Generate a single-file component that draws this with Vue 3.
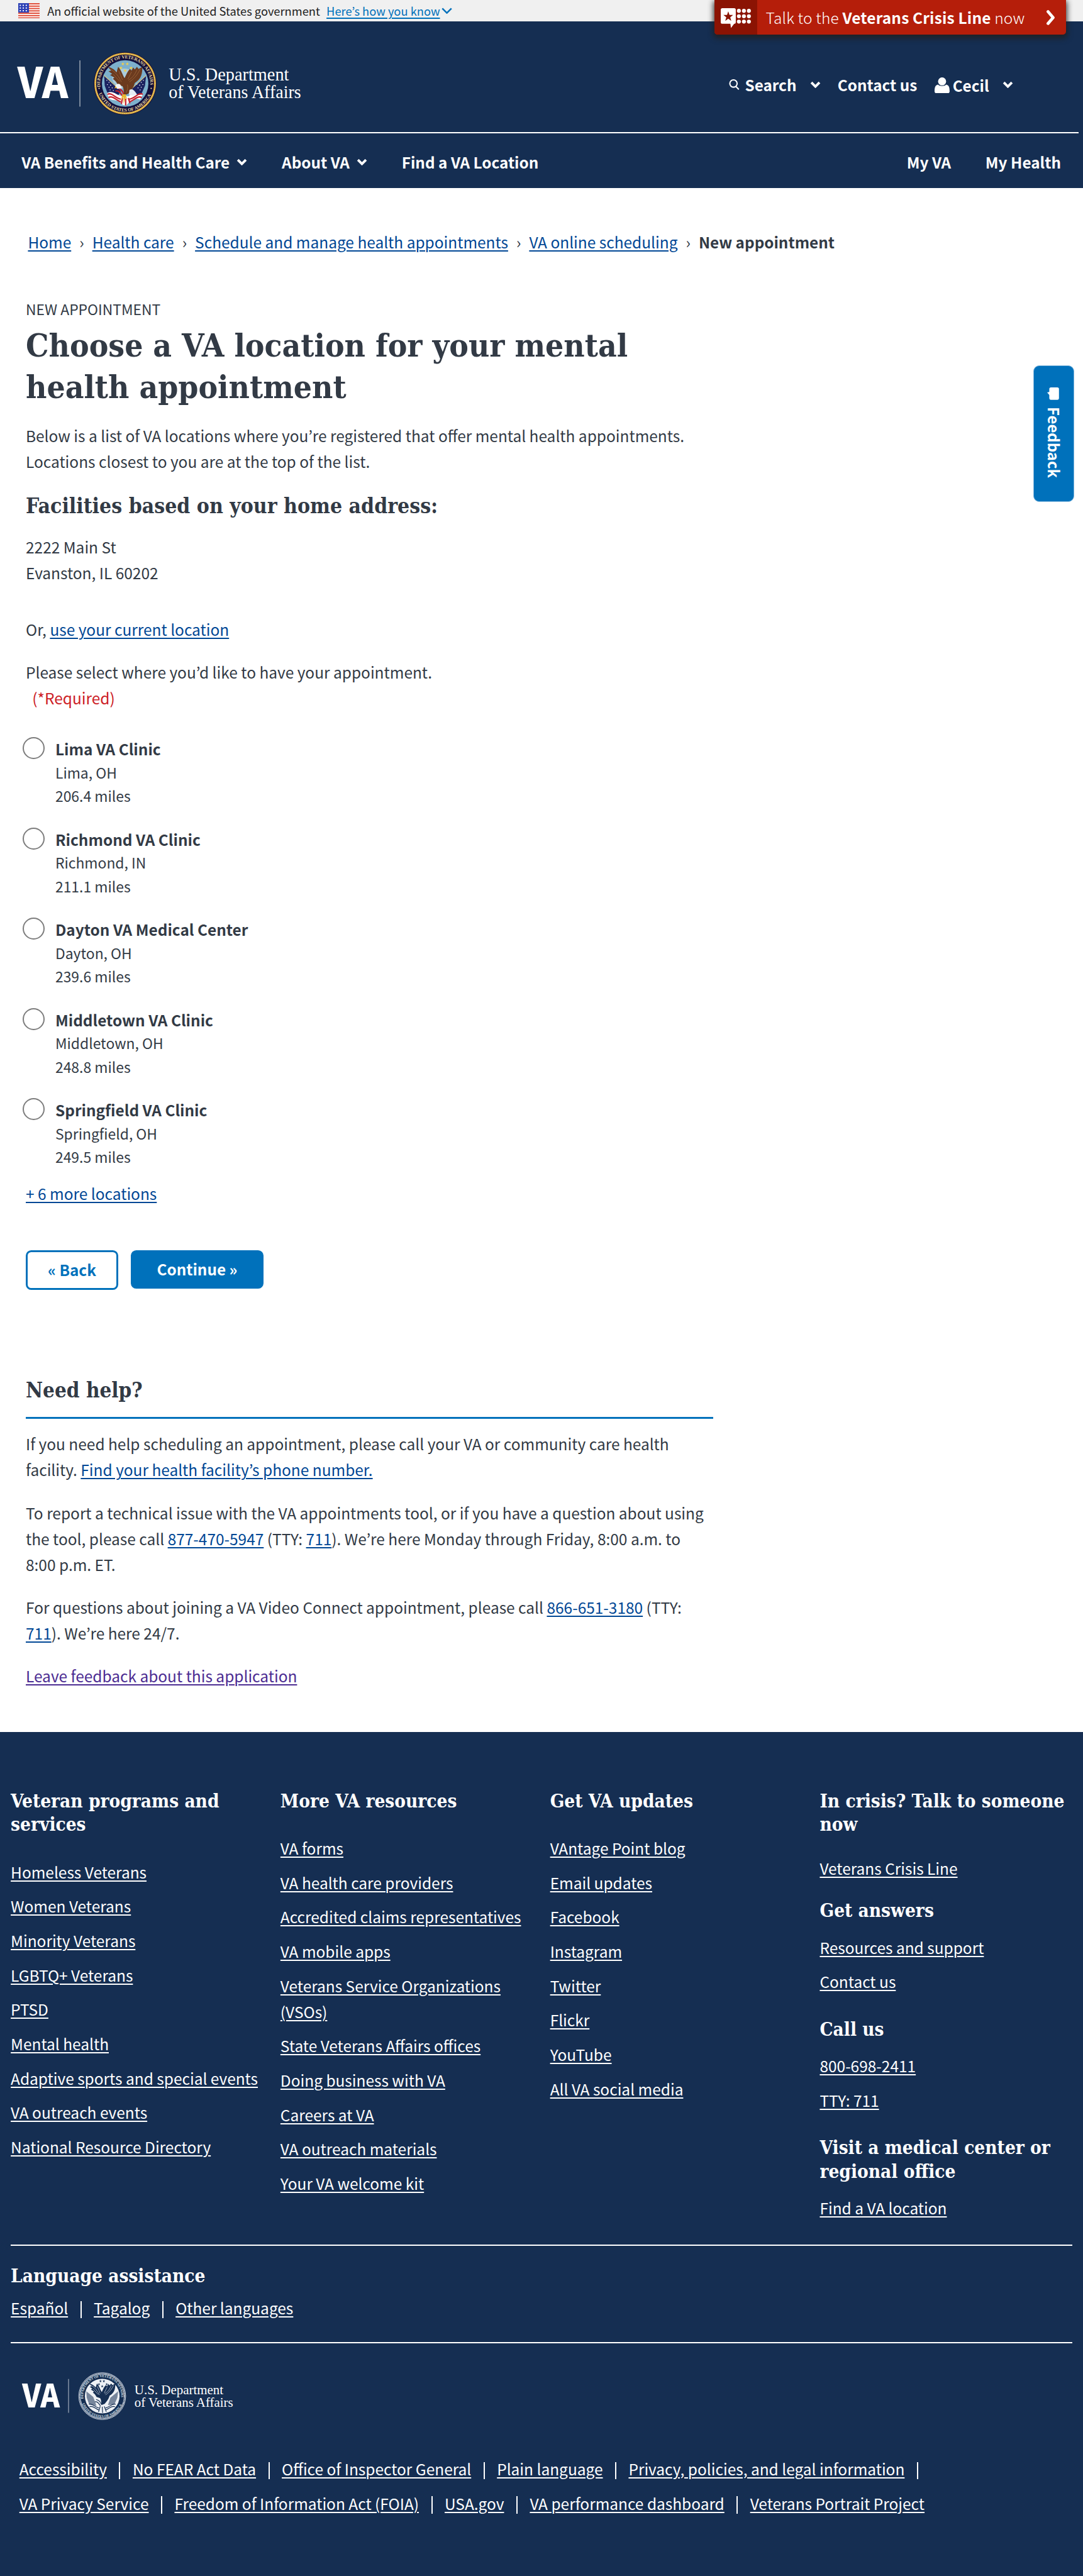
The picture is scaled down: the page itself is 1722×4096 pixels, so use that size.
<script setup>
import { ref } from 'vue'

const crumbs = ['Home', 'Health care', 'Schedule and manage health appointments', 'VA online scheduling']

const facilities = [
  { name: 'Lima VA Clinic', city: 'Lima, OH', distance: '206.4 miles' },
  { name: 'Richmond VA Clinic', city: 'Richmond, IN', distance: '211.1 miles' },
  { name: 'Dayton VA Medical Center', city: 'Dayton, OH', distance: '239.6 miles' },
  { name: 'Middletown VA Clinic', city: 'Middletown, OH', distance: '248.8 miles' },
  { name: 'Springfield VA Clinic', city: 'Springfield, OH', distance: '249.5 miles' },
]
const selected = ref(null)

const columns = [
  {
    title: 'Veteran programs and services',
    links: ['Homeless Veterans', 'Women Veterans', 'Minority Veterans', 'LGBTQ+ Veterans', 'PTSD', 'Mental health', 'Adaptive sports and special events', 'VA outreach events', 'National Resource Directory'],
  },
  {
    title: 'More VA resources',
    links: ['VA forms', 'VA health care providers', 'Accredited claims representatives', 'VA mobile apps', 'Veterans Service Organizations (VSOs)', 'State Veterans Affairs offices', 'Doing business with VA', 'Careers at VA', 'VA outreach materials', 'Your VA welcome kit'],
  },
  {
    title: 'Get VA updates',
    links: ['VAntage Point blog', 'Email updates', 'Facebook', 'Instagram', 'Twitter', 'Flickr', 'YouTube', 'All VA social media'],
  },
]

const contactGroups = [
  { title: 'In crisis? Talk to someone now', links: ['Veterans Crisis Line'] },
  { title: 'Get answers', links: ['Resources and support', 'Contact us'] },
  { title: 'Call us', links: ['800-698-2411', 'TTY: 711'] },
  { title: 'Visit a medical center or regional office', links: ['Find a VA location'] },
]

const languages = ['Español', 'Tagalog', 'Other languages']
const legalRows = [
  ['Accessibility', 'No FEAR Act Data', 'Office of Inspector General', 'Plain language', 'Privacy, policies, and legal information'],
  ['VA Privacy Service', 'Freedom of Information Act (FOIA)', 'USA.gov', 'VA performance dashboard', 'Veterans Portrait Project'],
]

const starPoints = '0,-3.4 0.8,-1.1 3.2,-1.1 1.3,0.4 2,2.8 0,1.4 -2,2.8 -1.3,0.4 -3.2,-1.1 -0.8,-1.1'
const sealStars = [[-4.3, -36.5], [4, -36.5], [-8, -29], [11, -29], [0, -24]]
const flagStars = [[-34, -6], [-30, -2], [-33, 2], [-27, 3], [-30, 7], [-24, 8], [-28, 12], [-22, 13], [34, -6], [30, -2], [33, 2], [27, 3], [30, 7], [24, 8], [28, 12], [22, 1]]
</script>

<template>
  <div class="page">
    <div class="gov-banner">
      <svg class="flag" viewBox="0 0 40 29">
        <rect width="40" height="29" fill="#fff" />
        <g fill="#e0503c">
          <rect v-for="n in 7" :key="n" :y="(n - 1) * 4.4" width="40" height="2.4" />
        </g>
        <rect width="20" height="17.5" fill="#2b3fb5" />
        <g fill="#fff">
          <template v-for="r in 3" :key="r">
            <rect v-for="c in 3" :key="c" :x="c * 5.6 - 3" :y="r * 5 - 2" width="2.4" height="2.2" />
          </template>
        </g>
      </svg>
      <span class="gov-text">An official website of the United States government</span>
      <a class="gov-link">Here’s how you know</a>
      <svg class="chev-gov" viewBox="0 0 20 12"><path d="M1.5 1.5 10 10 18.500 1.5" /></svg>
    </div>

    <a class="crisis">
      <span class="crisis-icon">
        <svg viewBox="0 0 56 38">
          <path fill="#fff" d="M3 0h22a3 3 0 0 1 3 3v23a3 3 0 0 1-3 3l-6 8-1-8H3a3 3 0 0 1-3-3V3a3 3 0 0 1 3-3z" />
          <path fill="#8b1303" d="m14 6 2.300 6.600 6.700.1-5.300 4.200 1.900 6.700L14 19.600l-5.600 4 1.900-6.700L5 12.700l6.700-.1z" />
          <g fill="#fff">
            <template v-for="r in 3" :key="r">
              <circle v-for="c in 3" :key="c" :cx="24.500 + c * 9.300" :cy="r * 10 - 5" r="3.700" />
            </template>
          </g>
        </svg>
      </span>
      <span class="crisis-text">Talk to the <b>Veterans Crisis Line</b> now</span>
      <svg class="crisis-chev" viewBox="0 0 18 28"><path d="M4 3 13.500 14 4 25" /></svg>
    </a>

    <header class="masthead">
      <svg class="logo" viewBox="30 92 540 126">
        <text class="va-mark" x="32" y="182.700" textLength="94.500" lengthAdjust="spacingAndGlyphs">VA</text>
        <path d="M148.300 112v86" stroke="#b7bfca" stroke-width="1.500" />
        <g transform="translate(232.500 155)">
          <circle r="58.500" fill="#120f3c" />
          <circle r="55.600" fill="none" stroke="#d9a83a" stroke-width="3.400" />
          <circle r="55.600" fill="none" stroke="#f3d67c" stroke-width="1.200" stroke-dasharray="2 1.500" />
          <circle r="43.300" fill="#7db0cc" />
          <ellipse cx="-2" cy="-10" rx="22" ry="18" fill="#a9cbdc" />
          <defs>
            <path id="arcTop" d="M-45.700 9.500A46.700 46.700 0 1 1 45.700 9.500" />
            <path id="arcBottom" d="M-50.600 13.500A52.400 52.400 0 0 0 50.600 13.500" />
          </defs>
          <text class="seal-text"><textPath href="#arcTop" startOffset="3" textLength="156">DEPARTMENT OF VETERANS AFFAIRS</textPath></text>
          <text class="seal-text"><textPath href="#arcBottom" startOffset="5" textLength="124">UNITED STATES OF AMERICA</textPath></text>
          <circle cx="-48.500" cy="9" r="1.300" fill="#f0dc9a" />
          <circle cx="48.500" cy="9" r="1.300" fill="#f0dc9a" />
          <path fill="#1b2260" d="M-39-14-8 14-14 24-32 20-38 4zM39-14 14 8 12 22 30 20 37 4z" />
          <path stroke="#d8c27a" stroke-width="1.200" d="M-39-15-14 8M39-15 14 8" />
          <circle v-for="(s, i) in flagStars" :key="i" :cx="s[0]" :cy="s[1]" r="0.900" fill="#fff" />
          <path fill="#fff" d="M-34 18C-22 10-14 26-4 22L6 24C16 14 24 26 34 18L28 30C16 26 14 32 8 34L2 41-4 40-10 34C-16 30-24 32-30 28z" />
          <path fill="none" stroke="#c5202c" stroke-width="2.600" d="M-33 20C-24 16-18 28-8 29M-31 26C-22 22-16 32-8 34M33 20C24 16 18 28 8 29M31 26C22 22 16 32 8 34M-18 14C-10 12-8 20-4 24M-15 8C-8 10-4 14-3 20M-5 27-7 38M1 28 1 41M6 27 9 37" />
          <path fill="#6b3a1e" d="M-33-32C-26-29-20-27-16-21L-13-31C-7-25-5-16-1-10C3-18 4-22 9-27L12-24 15-30 18-26 22-31 25-27 32-31C32-19 31-9 18-1C16 8 10 14 6 19L-2 22C-3 14-2 10-5 5L-14 2C-16-3-19-6-23-9L-20-11-28-16-24-18-31-23-26-24z" />
          <path fill="none" stroke="#9c653a" stroke-width="1" d="M-28-27C-18-22-11-12-7-3M-22-17-10-4M-12-24-5-7M28-27C22-14 15-8 8-3M22-26C18-15 12-10 6-6M12-22 5-8M4 2C6 8 4 12 2 17" />
          <path fill="#f4f4f4" d="M-18 3C-14-1-9 0-8 4L-6 9-15 10-18 6z" />
          <path fill="#e8b62f" d="M-18 5-20 9-15 8zM-5 20-8 32-3 25-3 38 1 26 4 30 1 20z" />
          <path fill="#e6edf4" d="M8 12C14 8 18 14 22 20C16 24 10 22 7 20z" />
          <polygon v-for="(s, i) in sealStars" :key="'s' + i" :points="starPoints" :transform="`translate(${s[0]} ${s[1]})`" fill="#f2cf4a" />
        </g>
        <text class="dept" x="313.500" y="149.500" textLength="224" lengthAdjust="spacingAndGlyphs">U.S. Department</text>
        <text class="dept" x="313.500" y="182.500" textLength="246.500" lengthAdjust="spacingAndGlyphs">of Veterans Affairs</text>
      </svg>
      <div class="utils">
        <svg class="mag" viewBox="0 0 20 20"><circle cx="8.500" cy="8" r="6.800" /><path d="m13 13.500 5.500 5.500" /></svg>
        <span class="u-search">Search</span>
        <svg class="chev u-chev1" viewBox="0 0 20 13"><path d="M2.500 2.500 10 10 17.500 2.500" /></svg>
        <span class="u-contact">Contact us</span>
        <svg class="person" viewBox="0 0 28 30"><circle cx="14" cy="7.500" r="7.500" /><path d="M6.500 13.500C9 17 19 17 21.500 13.500 27 15 28 19 28 26c0 2-1.500 4-4 4H4c-2.500 0-4-2-4-4 0-7 1-11 6.500-12.500z" /></svg>
        <span class="u-name">Cecil</span>
        <svg class="chev u-chev2" viewBox="0 0 20 13"><path d="M2.500 2.500 10 10 17.500 2.500" /></svg>
      </div>
    </header>

    <nav class="nav">
      <span class="nav-item">VA Benefits and Health Care<svg class="chev" viewBox="0 0 20 13"><path d="M2.500 2.500 10 10 17.500 2.500" /></svg></span>
      <span class="nav-item">About VA<svg class="chev" viewBox="0 0 20 13"><path d="M2.500 2.500 10 10 17.500 2.500" /></svg></span>
      <span class="nav-item">Find a VA Location</span>
      <span class="nav-item push">My VA</span>
      <span class="nav-item">My Health</span>
    </nav>

    <main class="main">
      <div class="crumbs">
        <template v-for="c in crumbs" :key="c">
          <a class="link">{{ c }}</a><span class="crumb-sep">›</span>
        </template>
        <b>New appointment</b>
      </div>

      <div class="eyebrow">NEW APPOINTMENT</div>
      <h1>Choose a VA location for your mental<br />health appointment</h1>
      <p class="intro">Below is a list of VA locations where you’re registered that offer mental health appointments.<br />Locations closest to you are at the top of the list.</p>
      <h2 class="home">Facilities based on your home address:</h2>
      <p class="address">2222 Main St<br />Evanston, IL 60202</p>
      <p class="or">Or, <a class="link">use your current location</a></p>
      <p class="prompt">Please select where you’d like to have your appointment.<br /><span class="required">(*Required)</span></p>

      <div class="facilities">
        <label v-for="f in facilities" :key="f.name" class="facility" @click="selected = f.name">
          <span class="radio" :class="{ on: selected === f.name }"></span>
          <span class="facility-text">
            <b>{{ f.name }}</b>
            <span>{{ f.city }}</span>
            <span>{{ f.distance }}</span>
          </span>
        </label>
      </div>

      <p class="more"><a class="link">+ 6 more locations</a></p>

      <div class="buttons">
        <button class="btn back">« Back</button>
        <button class="btn continue">Continue »</button>
      </div>

      <section class="help">
        <h2>Need help?</h2>
        <p>If you need help scheduling an appointment, please call your VA or community care health<br />facility. <a class="link">Find your health facility’s phone number.</a></p>
        <p>To report a technical issue with the VA appointments tool, or if you have a question about using<br />the tool, please call <a class="link">877-470-5947</a> (TTY: <a class="link">711</a>). We’re here Monday through Friday, 8:00 a.m. to<br />8:00 p.m. ET.</p>
        <p>For questions about joining a VA Video Connect appointment, please call <a class="link">866-651-3180</a> (TTY:<br /><a class="link">711</a>). We’re here 24/7.</p>
        <p><a class="link visited">Leave feedback about this application</a></p>
      </section>
    </main>

    <button class="feedback">
      <svg viewBox="0 0 22 23"><path d="M7 0h12a3 3 0 0 1 3 3v17a3 3 0 0 1-3 3H7a3 3 0 0 1-3-3v-6L0 9.500l4-1V3a3 3 0 0 1 3-3z" /></svg>
      <span>Feedback</span>
    </button>

    <footer class="footer">
      <div class="columns">
        <div v-for="col in columns" :key="col.title" class="col">
          <h3>{{ col.title }}</h3>
          <ul>
            <li v-for="l in col.links" :key="l"><a>{{ l }}</a></li>
          </ul>
        </div>
        <div class="col contact">
          <div v-for="g in contactGroups" :key="g.title" class="group">
            <h3>{{ g.title }}</h3>
            <ul>
              <li v-for="l in g.links" :key="l"><a>{{ l }}</a></li>
            </ul>
          </div>
        </div>
      </div>

      <div class="language">
        <h3>Language assistance</h3>
        <div class="row">
          <template v-for="(l, i) in languages" :key="l">
            <i v-if="i" class="bar"></i><a>{{ l }}</a>
          </template>
        </div>
      </div>

      <svg class="footer-logo" viewBox="36 4410 404 96">
        <text class="va-mark small" x="41" y="4478.700" textLength="70" lengthAdjust="spacingAndGlyphs">VA</text>
        <path d="M127.300 4426v63" stroke="#b7bfca" stroke-width="1.200" />
        <g transform="translate(190 4458) scale(0.760)">
          <circle r="57.500" fill="none" stroke="#c9d1dc" stroke-width="1.500" />
          <circle r="54.500" fill="none" stroke="#dfe5ec" stroke-width="3.600" stroke-dasharray="1.800 1" />
          <text class="seal-text mono"><textPath href="#arcTop" startOffset="3" textLength="156">DEPARTMENT OF VETERANS AFFAIRS</textPath></text>
          <text class="seal-text mono"><textPath href="#arcBottom" startOffset="5" textLength="124">UNITED STATES OF AMERICA</textPath></text>
          <circle r="42.500" fill="#eef1f5" />
          <g fill="#152e52">
            <path d="M-39-12-22 2-14 24-32 20-38 4zM39-12 20 4 14 22 30 20 37 4z" opacity="0.550" />
            <path d="M-33-32C-26-29-20-27-16-21L-13-31C-7-25-5-16-1-10C3-18 4-22 9-27L12-24 15-30 18-26 22-31 25-27 32-31C32-19 31-9 18-1C16 8 10 14 6 19L-2 22C-3 14-2 10-5 5L-14 2C-16-3-19-6-23-9L-20-11-28-16-24-18-31-23-26-24z" />
            <polygon v-for="(s, i) in sealStars" :key="i" :points="starPoints" :transform="`translate(${s[0]} ${s[1]})`" />
          </g>
          <path fill="none" stroke="#c3ccd8" stroke-width="1.200" d="M-28-27C-18-22-11-12-7-3M-22-17-10-4M-12-24-5-7M28-27C22-14 15-8 8-3M22-26C18-15 12-10 6-6M12-22 5-8" />
          <path fill="none" stroke="#152e52" stroke-width="1.800" d="M-33 20C-24 16-18 28-8 29M-31 26C-22 22-16 32-8 34M33 20C24 16 18 28 8 29M31 26C22 22 16 32 8 34M-18 14C-10 12-8 20-4 24M-15 8C-8 10-4 14-3 20M-5 25-9 39M0 26 1 41M5 25 10 38" />
        </g>
        <text class="dept small" x="250" y="4454" textLength="165.500" lengthAdjust="spacingAndGlyphs">U.S. Department</text>
        <text class="dept small" x="250" y="4478" textLength="183.500" lengthAdjust="spacingAndGlyphs">of Veterans Affairs</text>
      </svg>

      <div class="legal">
        <div v-for="(r, ri) in legalRows" :key="ri" class="row">
          <template v-for="(l, i) in r" :key="l">
            <i v-if="i" class="bar"></i><a>{{ l }}</a>
          </template>
          <i v-if="ri === 0" class="bar"></i>
        </div>
      </div>
    </footer>
  </div>
</template>

<style>
html {
  font-size: 8.54167px;
}
body {
  margin: 0;
  background: #fff;
}
</style>

<style scoped>
.page {
  position: relative;
  width: 201.6rem;
  height: 4096px;
  display: flex;
  flex-direction: column;
  overflow: hidden;
  font-family: "Noto Sans CJK KR", "Noto Sans CJK SC", "Noto Sans", sans-serif;
  font-size: 2.864rem;
  line-height: 4.8rem;
  color: #323a45;
  white-space: nowrap;
}
h1, h2, h3, p, ul {
  margin: 0;
  padding: 0;
}
ul { list-style: none; }
svg { display: block; flex: none; }
h1, h2, h3 {
  font-family: "DejaVu Serif Condensed", "DejaVu Serif", serif;
  font-stretch: condensed;
  font-weight: 700;
}

.gov-banner {
  height: 4rem;
  background: #f0f0f0;
  display: flex;
  align-items: center;
  padding-left: 3.4rem;
  font-size: 2.142rem;
  line-height: 4rem;
  color: #212121;
}
.flag { width: 4rem; height: 2.9rem; }
.gov-text { margin-left: 1.4rem; }
.gov-link { margin-left: 1.2rem; color: #0071bb; text-decoration: underline; text-underline-offset: 0.3rem; text-decoration-thickness: 0.2rem; }
.chev-gov { width: 2rem; height: 1.2rem; margin-left: 0.3rem; fill: none; stroke: #0071bb; stroke-width: 3; }

.crisis {
  position: absolute;
  top: 0;
  left: 133rem;
  width: 65.4rem;
  height: 6.4rem;
  display: flex;
  align-items: center;
  background: #b51e0a;
  color: #fff;
  border-radius: 0 0 0.6rem 0.6rem;
  box-shadow: 0 0.5rem 1rem 0.2rem rgba(32, 32, 32, 0.85);
}
.crisis-icon {
  width: 8rem;
  height: 6.4rem;
  background: #8b1303;
  border-radius: 0 0 0 0.6rem;
  display: flex;
  align-items: center;
  justify-content: center;
}
.crisis-icon svg { width: 5.6rem; height: 3.8rem; margin-top: 0.4rem; }
.crisis-text { margin-left: 1.55rem; padding-top: 0.3rem; font-weight: 300; line-height: 6.4rem; letter-spacing: 0.018rem; }
.crisis-text b { font-weight: 700; }
.crisis-chev { width: 1.8rem; height: 2.8rem; margin-left: auto; margin-right: 1.9rem; margin-top: 0.2rem; fill: none; stroke: #fff; stroke-width: 5.500; stroke-linecap: round; stroke-linejoin: round; }

.masthead {
  height: 20.6rem;
  background: #152e52;
  display: flex;
  align-items: flex-start;
  color: #fff;
}
.logo { width: 54rem; height: 12.6rem; margin: 5.2rem 0 0 3rem; }
.va-mark { font: 900 78.500px "Noto Sans CJK KR", sans-serif; fill: #fff; }
.va-mark.small { font-size: 59px; }
.dept { font: 400 34px "Liberation Serif", serif; fill: #fff; }
.dept.small { font-size: 25px; }
.seal-text { font: 700 8.500px "Liberation Serif", serif; fill: #e8d8a0; }
.seal-text.mono { fill: #dfe5ec; }
.utils {
  margin-left: auto;
  padding: 9.1rem 13rem 0 0;
  display: flex;
  align-items: center;
  font-weight: 700;
  font-size: 2.845rem;
}
.mag { width: 2rem; height: 2rem; margin-right: 1rem; fill: none; stroke: #fff; stroke-width: 2.400; }
.chev { width: 2rem; height: 1.3rem; fill: none; stroke: #fff; stroke-width: 4.600; }
.u-chev1 { margin: 0 3.1rem 0 2.55rem; }
.person { width: 2.8rem; height: 3rem; margin: 0.3rem 0.6rem 0 3.2rem; fill: #fff; }
.u-name { margin-top: 0.4rem; }
.u-chev2 { margin-left: 2.5rem; }

.nav {
  height: 7.5rem;
  padding: 2.9rem 4.1rem 0 4rem;
  background: #152e52;
  color: #fff;
  font-weight: 700;
  font-size: 2.845rem;
  display: flex;
  align-items: flex-start;
  gap: 6.4rem;
  position: relative;
}
.nav::before {
  content: "";
  position: absolute;
  left: 0;
  top: 0;
  width: 200.8rem;
  height: 2px;
  background: #fff;
}
.nav-item { display: flex; align-items: center; gap: 1.3rem; padding-top: 0.3rem; }
.push { margin-left: auto; }

.main { padding: 7.6rem 0 8.05rem 4.8rem; width: 128rem; }
.link { color: #004795; text-decoration: underline; text-underline-offset: 0.4rem; text-decoration-thickness: 0.2rem; }
.link.visited { color: #4c2c92; }
.crumbs { display: flex; padding-left: 0.4rem; }
.crumbs > * { flex: none; }
.crumbs b { font-size: 2.845rem; }
.crumb-sep { width: 3.92rem; text-align: center; }
.eyebrow { margin-top: 7.7rem; font-size: 2.68rem; }
h1 { margin-top: 0.46rem; font-size: 5.98rem; line-height: 7.8rem; }
.intro { margin-top: 2.7rem; }
h2 { font-size: 3.92rem; line-height: 5.2rem; }
.home { margin-top: 3.4rem; }
.address { margin-top: 2.54rem; }
.or { margin-top: 5.7rem; }
.prompt { margin-top: 3.15rem; }
.required { color: #cd2026; margin-left: 1.2rem; }
.facilities { margin-top: 5rem; display: flex; flex-direction: column; gap: 3.6rem; }
.facility { display: flex; margin-left: -0.6rem; }
.radio { box-sizing: border-box; width: 4.1rem; height: 4.1rem; border: 2px solid #7d7d7d; border-radius: 50%; margin-right: 2rem; }
.radio.on { background: #0071bb; }
.facility-text { display: flex; flex-direction: column; line-height: 4.4rem; }
.facility-text b { font-size: 2.855rem; }
.facility-text span { font-size: 2.68rem; }
.more { margin-top: 2.15rem; }
.buttons { display: flex; gap: 2.4rem; margin-top: 8.1rem; height: 7.4rem; }
.btn { box-sizing: border-box; padding: 0 0 0.1rem; font: inherit; font-size: 2.845rem; font-weight: 700; border-radius: 1rem; border: 0; text-align: center; }
.back { width: 17.2rem; height: 7.4rem; border: 0.4rem solid #0071bb; background: #fff; color: #0071bb; }
.continue { width: 24.6rem; height: 7.2rem; background: #0071bb; color: #fff; }
.help { margin-top: 16.2rem; }
.help h2 { padding-bottom: 2.25rem; border-bottom: 0.4rem solid #0071bb; font-size: 3.86rem; }
.help p { margin-top: 3.2rem; }
.help h2 + p { margin-top: 2.3rem; }

.feedback {
  position: absolute;
  left: 192.4rem;
  top: 68rem;
  width: 7.6rem;
  height: 25.4rem;
  box-sizing: border-box;
  padding: 4rem 0 0;
  border: 0.1rem solid #7db4dc;
  border-radius: 1.1rem;
  background: #0071bb;
  color: #fff;
  font: 700 2.8rem "Noto Sans CJK KR", sans-serif;
  display: flex;
  flex-direction: column;
  align-items: center;
}
.feedback svg { width: 2.2rem; height: 2.3rem; fill: #fff; margin-right: 0.4rem; }
.feedback span { writing-mode: vertical-rl; margin-top: 1.3rem; line-height: 4rem; }

.footer {
  flex: 1;
  background: #152e52;
  color: #fff;
  padding: 10.6rem 2rem 0;
}
.footer a { text-decoration: underline; text-underline-offset: 0.4rem; text-decoration-thickness: 0.2rem; }
.columns { display: grid; grid-template-columns: 50.2rem 50.2rem 50.2rem 1fr; height: 84.8rem; }
.col { white-space: normal; }
.columns h3 { width: 47rem; }
h3 { font-size: 3.46rem; line-height: 4.4rem; }
.col ul { margin-top: 4.2rem; display: flex; flex-direction: column; gap: 1.6rem; width: 46.5rem; }
.contact ul { margin-top: 2.2rem; }
.contact .group:first-child ul { margin-top: 3.5rem; }
.group + .group { margin-top: 4.25rem; }
.group:nth-child(2) { margin-top: 3.36rem; }
.language { border-top: 2px solid #fff; border-bottom: 2px solid #fff; padding: 3.45rem 0 4rem; }
.language .row { margin-top: 1.27rem; }
.row { display: flex; gap: 2.28rem; }
.bar { width: 2px; height: 3.2rem; background: #fff; margin-top: 1.15rem; }
.footer-logo { width: 40.4rem; height: 9.6rem; margin: 5.04rem 0 6.3rem 1.6rem; }
.legal { display: flex; flex-direction: column; gap: 1.6rem; padding-left: 1.6rem; }
</style>
